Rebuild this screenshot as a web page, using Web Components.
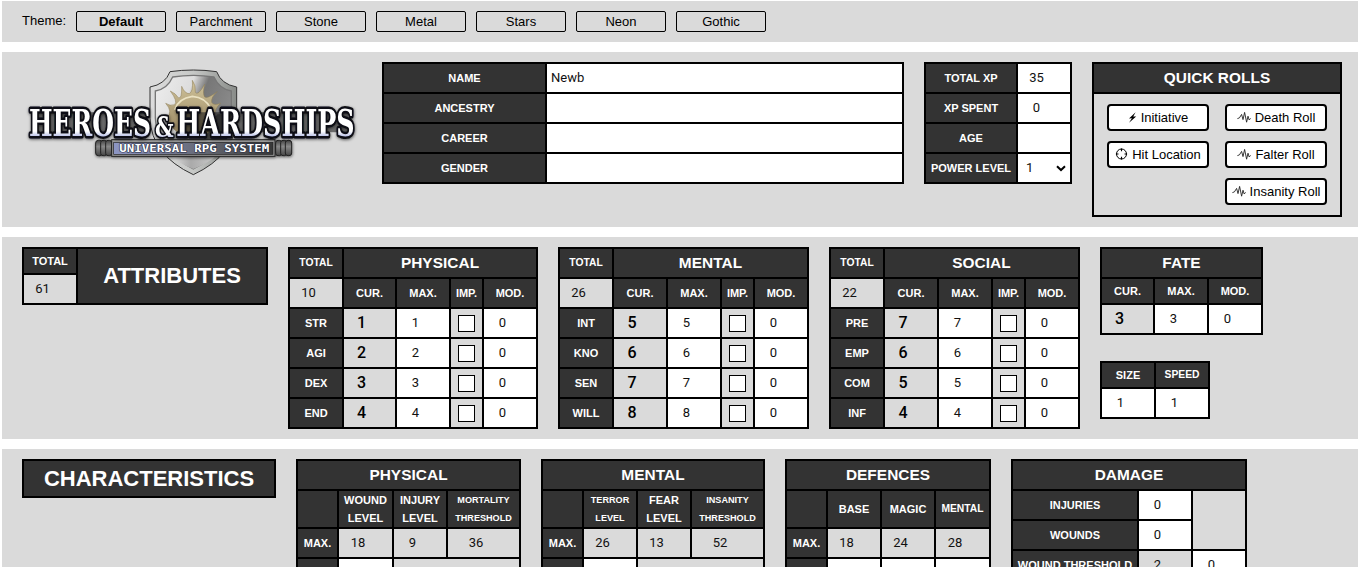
<!DOCTYPE html>
<html lang="en">
<head>
<meta charset="utf-8">
<title>Heroes &amp; Hardships</title>
<style>
body{margin:0;height:567px;background:#fff;color:#000;font:13px/18px "Liberation Sans",Arial,sans-serif;overflow:hidden}
</style>
</head>
<body>
<hh-sheet></hh-sheet>
<script>
const define = (name, css, html, setup) => customElements.define(name, class extends HTMLElement {
  constructor() {
    super();
    this.attachShadow({mode: 'open'}).innerHTML = '<style>:host{box-sizing:border-box}' + css + '</style>' + html;
  }
  connectedCallback() { if (setup) setup(this, this.shadowRoot); }
});

define('hh-panel', `
:host{display:flex;align-items:flex-start;gap:20px;background:#dadada;padding:10px 20px;height:var(--h)}`, '<slot></slot>');

/* Ruled table: the black ground shows through the 2px gaps. */
define('hh-grid', `
:host{display:grid;flex:none;gap:2px;padding:2px;background:#000;grid-template-columns:var(--c);grid-template-rows:var(--r)}`,
'<slot></slot>', el => {
  el.style.setProperty('--c', el.getAttribute('cols').split(' ').map(n => n + 'px').join(' '));
  el.style.setProperty('--r', el.getAttribute('rows').split(' ').map(n => n + 'px').join(' '));
  for (const c of el.children) {
    if (c.hasAttribute('span')) c.style.gridColumn = 'span ' + c.getAttribute('span');
    if (c.hasAttribute('down')) c.style.gridRow = 'span ' + c.getAttribute('down');
  }
});

define('hh-label', `
:host{display:flex;align-items:center;justify-content:center;text-align:center;background:#333;color:#fff;font-weight:bold;font-size:11px;line-height:18px;white-space:nowrap;overflow:hidden}
:host([size=s]){font-size:10.3px}
:host([size=xs]){font-size:9.1px}
:host([size=l]){font-size:15.4px;letter-spacing:.05px}
:host([size=xl]){font-size:22px}`, '<slot></slot>');

define('hh-num', `
:host{display:flex;align-items:center;justify-content:center;background:#fff;padding:0 15px 0 0;font:13px/18px Roboto,sans-serif;color:#111;overflow:hidden}
:host([calc]){background:#dadada}
:host([cur]){background:#dadada;font-size:16px;font-weight:500;color:#000;padding-right:16px}
:host([text]){justify-content:flex-start;padding:0 4px}`, '<slot></slot>');

define('hh-check', `
:host{display:flex;background:#dadada;align-items:flex-start;justify-content:center;padding-top:6px}
i{box-sizing:border-box;width:17px;height:17px;border:1px solid #000;background:#fff}`, '<i></i>');

define('hh-select', `
:host{display:flex;align-items:center;justify-content:space-between;background:#fff;padding:0 4px 0 8px;font:13px/18px Roboto,sans-serif;color:#111}`,
'<slot></slot><svg width="10" height="7" viewBox="0 0 10 7"><path d="M1 1.2 5 5 9 1.2" fill="none" stroke="#000" stroke-width="2"/></svg>');

define('hh-theme', `
:host{display:flex;align-items:center;justify-content:center;width:90px;height:21px;border:1px solid #000;border-radius:2px;line-height:19px}
:host([on]){font-weight:bold}`, '<slot></slot>');

const icons = {
  bolt: '<svg width="9" height="13" viewBox="0 0 9 13"><path d="M7.6 1.2 1 7.4l2.9-.2L1 11.8 8.2 5.4l-3 .1z" fill="#000"/></svg>',
  target: '<svg width="13" height="14" viewBox="0 0 13 14" fill="none" stroke="#000"><circle cx="6.5" cy="6" r="5"/><path d="M6.5 .6v2.6M6.5 8.8v2.6M.9 6h2.6M9.5 6h2.6" stroke-width="1.1"/></svg>',
  pulse: '<svg width="14" height="13" viewBox="0 0 14 13"><path d="M.4 7.6 2.4 6.9 4.6 3.4 6 8.6 7.6 1.4 9.6 11.2 11 5.2 12.2 9 13.6 7.4" fill="none" stroke="#222" stroke-width=".9"/></svg>'
};
define('hh-roll', `
:host{display:flex;align-items:center;justify-content:center;gap:4px;width:102px;height:27px;border:2px solid #000;border-radius:4px;background:#fff;white-space:nowrap;line-height:23px}
b{display:flex}`, '<b></b><slot></slot>', (el, root) => {
  root.querySelector('b').innerHTML = icons[el.getAttribute('icon')];
});

define('hh-rolls', `
:host{display:flex;align-items:flex-start;justify-content:space-between;background:#dadada;padding:10px 13px}
div{display:grid;gap:10px}`, '<div><slot name="a"></slot></div><div><slot name="b"></slot></div>');

define('hh-stack', `:host{display:grid;justify-items:start;gap:26px}`, '<slot></slot>');

define('hh-logo', `
:host{display:block;flex:none;width:370px;height:130px}
svg{display:block}`, `
<svg width="370" height="130" viewBox="0 0 1110 390">
<defs>
<linearGradient id="s" x1="0" y1="0" x2="1" y2=".5"><stop offset="0" stop-color="#eee"/><stop offset=".42" stop-color="#ddd"/><stop offset=".58" stop-color="#777"/><stop offset="1" stop-color="#8e8e8e"/></linearGradient>
<linearGradient id="r" x1="0" x2="1"><stop offset="0" stop-color="#ddd"/><stop offset=".5" stop-color="#c6c8c6"/><stop offset="1" stop-color="#888b88"/></linearGradient>
<linearGradient id="p" x1="0" x2="1"><stop offset="0" stop-color="#e4e4e4"/><stop offset=".45" stop-color="#aaa"/><stop offset="1" stop-color="#ccc"/></linearGradient>
<linearGradient id="t" x1="0" y1="0" x2="0" y2="1"><stop offset=".7" stop-color="#fff"/><stop offset=".85" stop-color="#a5afe2"/></linearGradient>
<linearGradient id="b" x1="0" x2="1"><stop offset="0" stop-color="#8d96c4"/><stop offset=".6" stop-color="#62656f"/><stop offset="1" stop-color="#383838"/></linearGradient>
<linearGradient id="e" x1="0" y1="0" x2="0" y2="1"><stop offset="0" stop-color="#444"/><stop offset=".4" stop-color="#888"/><stop offset="1" stop-color="#444"/></linearGradient>
<linearGradient id="g" x1="0" y1="0" x2="0" y2="1"><stop offset="0" stop-color="#d0c39b"/><stop offset="1" stop-color="#94815a"/></linearGradient>
<filter id="f" x="-10%" y="-30%" width="120%" height="170%"><feDropShadow dx="1" dy="3" stdDeviation="5" flood-opacity=".6"/></filter>
</defs>
<path d="M480 50Q550 40 620 50Q634 88 680 96V190Q676 300 550 359Q424 300 420 190V96Q466 88 480 50Z" fill="url(#r)" stroke="#333" stroke-width="3"/>
<path d="M488 66Q550 56 612 66Q628 102 664 108V190Q660 286 550 342Q440 286 436 190V108Q472 102 488 66Z" fill="url(#s)" stroke="#777" stroke-width="4"/>
<path d="M478 300H622Q595 324 550 342Q505 324 478 300Z" fill="url(#p)"/>
<path d="M622 178H664Q664 250 630 285L575 245Z" fill="#333" opacity=".75"/>
<path d="M470 188Q490 170 467 145Q480 154 494 149Q504 139 481 108Q497 115 505 128Q516 134 515 94Q524 116 538 116Q550 110 547 76Q558 91 556 112Q564 124 584 88Q577 115 584 126Q592 132 622 110Q603 125 605 142Q610 153 632 145Q613 160 615 185Q610 245 550 250Q490 240 470 188Z" fill="url(#g)" stroke="#8c7d55" stroke-width="1.5"/>
<path d="M494 164Q505 130 547 124Q586 127 602 160" fill="none" stroke="#ebe2c2" stroke-width="5"/>
<path d="M75 172H405V232H75ZM520 172H1015V232H520Z" fill="#222" opacity=".6"/>
<g stroke="#222" stroke-width="3" fill="url(#e)" filter="url(#f)">
<rect x="257" y="256" width="20" height="46" rx="8"/><rect x="272" y="256" width="18" height="46" rx="7"/><rect x="287" y="256" width="18" height="46" rx="7"/>
<rect x="797" y="256" width="18" height="46" rx="7"/><rect x="812" y="256" width="18" height="46" rx="7"/><rect x="826" y="256" width="19" height="46" rx="8"/>
<rect x="305" y="254" width="490" height="50" fill="#999"/></g>
<rect x="311" y="262" width="478" height="36" fill="url(#b)" stroke="#222" stroke-width="2"/>
<text x="328" y="290" font-family="DejaVu Sans Mono,monospace" font-weight="bold" font-size="29" textLength="450" lengthAdjust="spacingAndGlyphs" fill="#fff" stroke="#252a40" stroke-width="3" paint-order="stroke">UNIVERSAL RPG SYSTEM</text>
<g font-family="DejaVu Serif,serif" font-weight="bold" fill="url(#t)" stroke="#0b0c12" stroke-width="15" stroke-linejoin="round" paint-order="stroke" filter="url(#f)">
<text x="57" y="242" font-size="114" textLength="366" lengthAdjust="spacingAndGlyphs">HEROES</text>
<text x="499" y="242" font-size="114" textLength="535" lengthAdjust="spacingAndGlyphs">HARDSHIPS</text>
<text x="435" y="245" font-size="84" stroke-width="11" textLength="56" lengthAdjust="spacingAndGlyphs">&amp;</text>
</g>
</svg>`);

const L = (t, a = '') => `<hh-label ${a}>${t}</hh-label>`;
const N = (t, a = '') => `<hh-num ${a}>${t}</hh-num>`;
const stats = (title, total, cols, rows) => `<hh-grid cols="${cols}" rows="28 28 28 28 28 28">` +
  L('TOTAL', 'size="s"') + L(title, 'size="l" span="4"') + N(total, 'calc') +
  ['CUR.', 'MAX.', 'IMP.', 'MOD.'].map(t => L(t)).join('') +
  rows.map(([n, v]) => L(n) + N(v, 'cur') + N(v) + '<hh-check></hh-check>' + N(0)).join('') + '</hh-grid>';

define('hh-sheet', `
:host{display:grid;gap:10px;padding:1px 0 0 2px;height:567px;align-content:start;overflow:hidden}
.themes{gap:10px}
.themes span{width:44px;line-height:19px}
hh-logo{margin:-7px 2px 0 -12px}
.top,.attr,.chars{gap:0}
.top hh-grid,.attr>*,.chars>*{margin-right:20px}`, `
<hh-panel class="themes" style="--h:41px"><span>Theme:</span>
<hh-theme on>Default</hh-theme><hh-theme>Parchment</hh-theme><hh-theme>Stone</hh-theme><hh-theme>Metal</hh-theme><hh-theme>Stars</hh-theme><hh-theme>Neon</hh-theme><hh-theme>Gothic</hh-theme></hh-panel>
<hh-panel class="top" style="--h:175px"><hh-logo></hh-logo>
<hh-grid cols="161 355" rows="28 28 28 28">${L('NAME')}${N('Newb', 'text')}${L('ANCESTRY')}${N('', 'text')}${L('CAREER')}${N('', 'text')}${L('GENDER')}${N('', 'text')}</hh-grid>
<hh-grid cols="90 52" rows="28 28 28 28">${L('TOTAL XP')}${N(35)}${L('XP SPENT')}${N(0)}${L('AGE')}${N('')}${L('POWER LEVEL')}<hh-select>1</hh-select></hh-grid>
<hh-grid cols="246" rows="28 121">${L('QUICK ROLLS', 'size="l"')}<hh-rolls>
<hh-roll slot="a" icon="bolt">Initiative</hh-roll><hh-roll slot="a" icon="target">Hit Location</hh-roll>
<hh-roll slot="b" icon="pulse">Death Roll</hh-roll><hh-roll slot="b" icon="pulse">Falter Roll</hh-roll><hh-roll slot="b" icon="pulse">Insanity Roll</hh-roll></hh-rolls></hh-grid></hh-panel>
<hh-panel class="attr" style="--h:202px">
<hh-grid cols="52 188" rows="24 28">${L('TOTAL')}${L('ATTRIBUTES', 'size="xl" down="2"')}${N(61, 'calc')}</hh-grid>
${stats('PHYSICAL', 10, '52 51 52 31 52', [['STR', 1], ['AGI', 2], ['DEX', 3], ['END', 4]])}
${stats('MENTAL', 26, '52 52 52 31 52', [['INT', 5], ['KNO', 6], ['SEN', 7], ['WILL', 8]])}
${stats('SOCIAL', 22, '52 52 52 31 52', [['PRE', 7], ['EMP', 6], ['COM', 5], ['INF', 4]])}
<hh-stack><hh-grid cols="51 52 52" rows="28 24 28">${L('FATE', 'size="l" span="3"')}${L('CUR.')}${L('MAX.')}${L('MOD.')}${N(3, 'cur')}${N(3)}${N(0)}</hh-grid>
<hh-grid cols="52 52" rows="24 28">${L('SIZE')}${L('SPEED', 'size="s"')}${N(1)}${N(1)}</hh-grid></hh-stack></hh-panel>
<hh-panel class="chars" style="--h:118px">
<hh-grid cols="250" rows="35">${L('CHARACTERISTICS', 'size="xl"')}</hh-grid>
<hh-grid cols="39 53 52 71" rows="28 36 28 28">${L('PHYSICAL', 'size="l" span="4"')}${L('')}${L('WOUND<br>LEVEL')}${L('INJURY<br>LEVEL')}${L('MORTALITY<br>THRESHOLD', 'size="xs"')}${L('MAX.')}${N(18, 'calc')}${N(9, 'calc')}${N(36, 'calc')}${L('')}${N('')}${N('', 'calc span="2"')}</hh-grid>
<hh-grid cols="39 52 52 71" rows="28 36 28 28">${L('MENTAL', 'size="l" span="4"')}${L('')}${L('TERROR<br>LEVEL', 'size="xs"')}${L('FEAR<br>LEVEL')}${L('INSANITY<br>THRESHOLD', 'size="xs"')}${L('MAX.')}${N(26, 'calc')}${N(13, 'calc')}${N(52, 'calc')}${L('')}${N('')}${N('', 'calc span="2"')}</hh-grid>
<hh-grid cols="39 52 52 53" rows="28 36 28 28">${L('DEFENCES', 'size="l" span="4"')}${L('')}${L('BASE')}${L('MAGIC')}${L('MENTAL', 'size="s"')}${L('MAX.')}${N(18, 'calc')}${N(24, 'calc')}${N(28, 'calc')}${L('')}${N('')}${N('')}${N('')}</hh-grid>
<hh-grid cols="124 52 52" rows="28 28 28 28">${L('DAMAGE', 'size="l" span="3"')}${L('INJURIES')}${N(0)}${N('', 'calc down="2"')}${L('WOUNDS')}${N(0)}${L('WOUND THRESHOLD')}${N(2, 'calc')}${N(0)}</hh-grid></hh-panel>`);
</script>
</body>
</html>
